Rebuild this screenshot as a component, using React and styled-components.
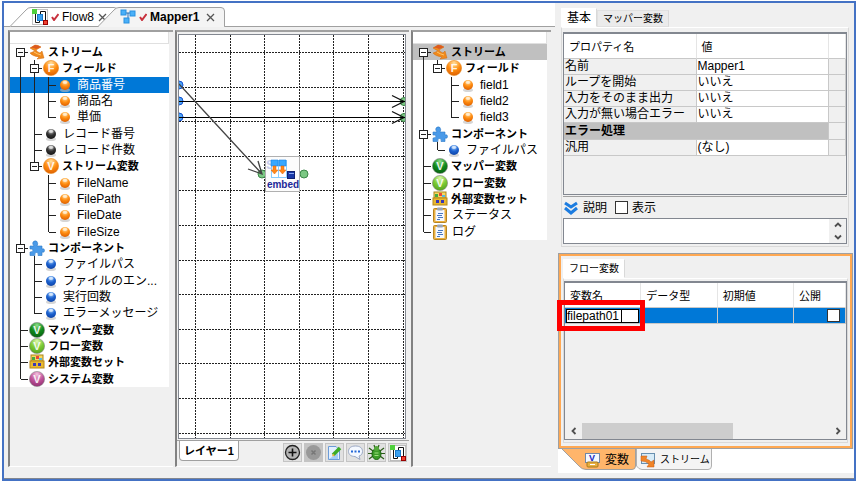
import React from 'react';
import styled, { createGlobalStyle } from 'styled-components';

const GlobalStyle = createGlobalStyle`
  * {
    box-sizing: border-box;
  }

  body {
    margin: 0;
    background: #fff;
    color: #000;
    font-family: 'Liberation Sans', 'Noto Sans CJK JP', sans-serif;
    font-size: 12px;
    line-height: 16px;
  }

  button, input, textarea {
    font: inherit;
    color: inherit;
    margin: 0;
    padding: 0;
    border-radius: 0;
  }

  svg {
    flex-shrink: 0;
  }
`;

const Page = styled.div`
  min-height: 100vh;
  padding: 1px 1px 1px 2px;
  display: flex;
`;

const Frame = styled.div`
  flex: 1;
  display: flex;
  flex-direction: column;
  border: 2px solid #4472c4;
  background: #f0f0f0;
`;

const Workspace = styled.div`
  flex: 1;
  display: grid;
  grid-template-columns: minmax(0, 551fr) minmax(0, 299fr);
`;

const StatusBar = styled.div`
  height: 6px;
  border-bottom: 1px solid #828790;
`;

/* ---------- editor ---------- */

const Editor = styled.main`
  display: flex;
  flex-direction: column;
`;

const EditorTabs = styled.div`
  display: flex;
  align-items: flex-end;
  height: 24px;
  padding-left: 6px;
  background: #fff;
  box-shadow: inset 0 -1px #a0a0a0;
`;

const EditorTabBox = styled.div`
  position: relative;
  display: flex;
  align-items: center;
  gap: ${(p) => (p.$active ? '7px' : '4px')};
  height: 20px;
  width: ${(p) => (p.$active ? '127px' : '108px')};
  margin-left: ${(p) => (p.$active ? '-20px' : '0')};
  padding-left: 22px;
  font-weight: ${(p) => (p.$active ? 'bold' : 'normal')};
`;

const TabShape = styled.svg`
  position: absolute;
  inset: 0;
  width: 100%;
  height: 100%;
`;

const PlainButton = styled.button`
  position: relative;
  display: flex;
  align-items: center;
  gap: 3px;
  border: 0;
  background: none;
`;

const EditorBody = styled.div`
  flex: 1;
  display: grid;
  grid-template-columns: minmax(0, 165fr) minmax(0, 234fr) minmax(0, 140fr);
  gap: 2px;
  padding: 3px 4px 6px;
`;

const Panel = styled.section`
  border-top: 2px solid #a0a0a0;
  border-left: 2px solid #828282;
  border-bottom: 1px solid #fff;
  display: flex;
  flex-direction: column;
  min-width: 0;
`;

const TreeBox = styled.div`
  margin-right: 4px;
  background: #fff;
`;

const TreeHeader = styled.div`
  height: 12px;
  border-right: 1px solid #e0e0e0;
  border-bottom: 1px solid #e0e0e0;
`;

const TreeList = styled.ul`
  display: flex;
  flex-direction: column;
  height: ${(p) => p.$height};
  margin: 0;
  padding: 0;
  list-style: none;
`;

const TreeRow = styled.li`
  flex: 1;
  display: flex;
  align-items: stretch;
  padding-left: 3px;
  white-space: nowrap;
  background: ${(p) => (p.$state === 'selected' ? '#0078d7' : p.$state === 'inactive' ? '#c0c0c0' : 'transparent')};
  color: ${(p) => (p.$state === 'selected' ? '#fff' : '#000')};
`;

const Guide = styled.span`
  position: relative;
  width: 14px;
  flex: none;

  &::before {
    content: '';
    position: absolute;
    display: ${(p) => (p.$kind === ' ' ? 'none' : 'block')};
    left: 7px;
    top: ${(p) => (p.$kind === 'r' ? '8px' : '0')};
    bottom: ${(p) => (p.$kind === 'l' || p.$kind === 'e' ? '8px' : '0')};
    border-left: 1px solid #222;
  }

  &::after {
    content: '';
    position: absolute;
    display: ${(p) => (p.$kind === ' ' || p.$kind === 'i' ? 'none' : 'block')};
    left: 8px;
    top: 8px;
    width: 7px;
    border-top: 1px solid #222;
  }
`;

const Expander = styled.button`
  position: absolute;
  z-index: 1;
  left: 3px;
  top: 4px;
  width: 9px;
  height: 9px;
  border: 1px solid #222;
  background: linear-gradient(#222, #222) center / 5px 1px no-repeat #fff;
`;

const NodeIcon = styled.svg`
  flex: none;
  width: 16px;
  height: 16px;
  margin-left: 2px;
`;

const NodeLabel = styled.span`
  margin-left: ${(p) => (p.$bold ? '3px' : '4px')};
  font-size: ${(p) => (p.$bold ? '11px' : '12px')};
  font-weight: ${(p) => (p.$bold ? 'bold' : 'normal')};
`;

const CanvasFrame = styled.div`
  flex: 1;
  display: flex;
  margin: 2px 3px 1px 1px;
  border: 1px solid #828790;
  background: #fff;
`;

const CanvasSvg = styled.svg`
  display: block;
  flex: 1;
  width: 100%;
  min-width: 0;
`;

const LayerBar = styled.div`
  display: flex;
  justify-content: space-between;
  height: 26px;
  padding: 0 2px;
  border-top: 1px solid #a0a0a0;
`;

const LayerTab = styled.button`
  width: 60px;
  height: 20px;
  border: 1px solid #a0a0a0;
  border-top: 0;
  border-radius: 0 0 4px 4px;
  background: #fff;
  font-size: 11px;
  font-weight: bold;
`;

const ToolGroup = styled.div`
  display: flex;
  gap: 2px;
  padding-top: 2px;
`;

const ToolButton = styled.button`
  display: grid;
  place-items: center;
  width: 19px;
  height: 19px;
  border: 1px solid #c4c4c4;
  background: ${(p) => (p.disabled ? '#c4c4c4' : '#e1e1e1')};
`;

/* ---------- side panels ---------- */

const Side = styled.aside`
  display: flex;
  flex-direction: column;
  min-width: 0;
  padding-left: 3px;
`;

const PropertyPanel = styled.section`
  display: flex;
  flex-direction: column;
  padding: 5px 5px 0 3px;
  margin-bottom: 6px;
`;

const PanelTabs = styled.div`
  display: flex;
  align-items: flex-end;
`;

const PanelTab = styled.button`
  height: ${(p) => (p.$active ? '19px' : '17px')};
  padding: 0 5px;
  border: 1px solid ${(p) => (p.$active ? '#fff' : '#e0e0e0')};
  border-right-color: #d9d9d9;
  background: ${(p) => (p.$active ? '#fff' : '#ebebeb')};
  font-size: ${(p) => (p.$small ? '10px' : '12px')};
`;

const PanelBody = styled.div`
  padding: ${(p) => (p.$tight ? '2px 0' : '4px 1px 2px')};
  border: 1px solid #d9d9d9;
  border-top-color: #fff;
`;

const TableBox = styled.div`
  position: relative;
  display: flex;
  flex-direction: column;
  height: ${(p) => p.$height};
  border: 1px solid #828790;
  border-top-width: 2px;
`;

const Table = styled.table`
  width: 100%;
  table-layout: fixed;
  border-collapse: separate;
  border-spacing: 0;
  background: #fff;

  th, td {
    height: 16px;
    padding: 0 0 0 1px;
    border-right: 1px solid #c8c8c8;
    border-bottom: 1px solid #c8c8c8;
    line-height: 15px;
    text-align: left;
    font-weight: normal;
    white-space: nowrap;
  }

  thead th {
    height: 25px;
    padding: 2px 0 0 5px;
    border-right-color: #e5e5e5;
    font-size: 11px;
  }

  tbody th, .end {
    background: #f0f0f0;
  }

  tbody .group {
    height: 17px;
    background: #c0c0c0;
    font-weight: bold;
  }

  col.narrow {
    width: 17px;
  }

  col.flag {
    width: 52px;
  }
`;

const DescriptionBar = styled.div`
  display: flex;
  align-items: center;
  height: 22px;
  margin-top: 1px;
  border-top: 1px solid #a0a0a0;
`;

const DescriptionLabel = styled.span`
  margin: 0 8px 0 4px;
`;

const CheckLabel = styled.label`
  display: flex;
  align-items: center;
  gap: 4px;
`;

const CheckBox = styled.input`
  appearance: none;
  width: 13px;
  height: 13px;
  border: 1px solid #333;
  background: #fff;
`;

const DescriptionBox = styled.div`
  display: flex;
  height: 26px;
  border: 1px solid #828790;
`;

const DescriptionText = styled.textarea`
  flex: 1;
  min-width: 0;
  border: 0;
  resize: none;
  background: #fff;
  overflow: hidden;
`;

const Spinner = styled.div`
  display: flex;
  flex-direction: column;
  width: 17px;
`;

const ArrowButton = styled.button`
  flex: 1;
  display: grid;
  place-items: center;
  border: 0;
  background: #f0f0f0;
`;

const VariablePanel = styled.section`
  margin-right: 1px;
  padding: 3px 2px 3px;
  border: 3px solid #ffa852;
  outline: 1px solid #a0a0a0;
  outline-offset: -1px;
`;

const VariableRow = styled.tr`
  background: #0078d7;

  td:first-child {
    position: relative;
  }
`;

const NameInput = styled.input`
  display: block;
  width: calc(100% - 1px);
  height: 14px;
  border: 1px solid #000;
  background: #fff;
  line-height: 12px;
`;

const Caret = styled.i`
  position: absolute;
  left: 56px;
  top: 1px;
  width: 1px;
  height: 13px;
  background: #000;
`;

const Highlight = styled.div`
  position: absolute;
  z-index: 2;
  inset: -8px -5px -8px -8px;
  border: 5px solid #f00;
  pointer-events: none;
`;

const PublicCheck = styled(CheckBox)`
  display: block;
  margin-left: auto;
  margin-right: 5px;
`;

const ScrollBar = styled.div`
  display: flex;
  height: 16px;
  margin-top: auto;
`;

const ScrollArrow = styled.button`
  display: grid;
  place-items: center;
  width: 17px;
  border: 0;
  background: none;
`;

const ScrollTrack = styled.div`
  flex: 1;
`;

const ScrollThumb = styled.div`
  width: 61%;
  height: 100%;
  background: #cdcdcd;
`;

const BottomTabs = styled.div`
  flex: 1;
  display: flex;
  align-items: flex-start;
  padding-left: 4px;
  background: #fff;
`;

const BottomTab = styled.button`
  position: relative;
  width: ${(p) => (p.$active ? '74px' : '76px')};
  height: 21px;
  padding: 0 0 0 ${(p) => (p.$active ? '23px' : '4px')};
  border: 0;
  background: none;
  font-size: ${(p) => (p.$active ? '12px' : '10px')};
  white-space: nowrap;
`;

const BottomTabInner = styled.span`
  position: relative;
  display: flex;
  align-items: center;
  gap: 4px;
`;

/* ---------- icons ---------- */

const HiddenSvg = styled.svg`
  position: absolute;
`;

const Defs = () => (
  <HiddenSvg width="0" height="0" aria-hidden="true">
    <defs>
      {[
        ['orange', '#ffe0a0', '#ff8c10', '#d85a00'],
        ['black', '#c8c8c8', '#333333', '#111111'],
        ['blue', '#a8d4ff', '#1c62d0', '#0c3fa0'],
        ['green', '#8ee08a', '#118a1c', '#055a10'],
        ['lime', '#dcf8b0', '#7ccb34', '#4f9c1c'],
        ['pink', '#f4c4e0', '#c0549a', '#8c2a6c'],
      ].map(([id, a, b, c]) => (
        <radialGradient key={id} id={id} cx="0.5" cy="0.2" r="0.85">
          <stop offset="0" stopColor={a} />
          <stop offset="0.5" stopColor={b} />
          <stop offset="1" stopColor={c} />
        </radialGradient>
      ))}
    </defs>
  </HiddenSvg>
);

const Ball = ({ color }) => (
  <>
    <ellipse cx="8" cy="13" rx="5" ry="2" fill="#bbb" opacity="0.6" />
    <circle cx="8" cy="8" r="5" fill={`url(#${color})`} />
    <ellipse cx="8" cy="5.5" rx="2.4" ry="1.4" fill="#fff" opacity="0.6" />
  </>
);

const Badge = ({ color, letter }) => (
  <>
    <circle cx="8" cy="8" r="7.6" fill={`url(#${color})`} stroke={color === 'orange' ? '#e88a20' : '#888'} strokeWidth="0.6" />
    <text x="8" y="12" textAnchor="middle" fontSize="11" fontWeight="bold" fill="#fff" fillOpacity="0.9">{letter}</text>
  </>
);

const StreamDrawing = () => (
  <>
    <path d="M1 4L6 1Q9 1 12 3L7 6Q8 8 11 9L13 7L15 14L8 15L10 13Q3 12 1 9L6 7Z" fill="#f08a1c" stroke="#d06a10" strokeWidth="0.5" />
    <path d="M1 4L6 1Q9 1 12 3L7 5Q4 3 1 4Z" fill="#dc5a20" />
    <path d="M5 8Q8 10 12 11" fill="none" stroke="#ffc468" />
  </>
);

const PuzzleDrawing = () => (
  <path
    d="M1 6H5Q3 4 4 2Q6 0 8 1.500Q9.500 4 8 6H13V9Q15.500 8 15.500 10.500Q15.500 13 13 12V15.500H9Q10 12.500 7.500 12.500Q5 12.500 6 15.500H1V12Q4 12 4 10Q4 8.500 1 9Z"
    fill="#4a9ae8"
    stroke="#2c78c8"
    strokeWidth="0.6"
  />
);

const BoxDrawing = () => (
  <>
    <rect x="2" y="1" width="12" height="6" fill="#f8d860" stroke="#a88418" />
    <rect x="3" y="3" width="3" height="3" fill="#48a840" />
    <rect x="7" y="2" width="3" height="3" fill="#e84838" />
    <rect x="10" y="4" width="3" height="2" fill="#58b8e0" />
    <rect x="1" y="7" width="14" height="7" fill="#e8b830" stroke="#b88818" />
    <rect x="4" y="9" width="3" height="3" fill="#3838b8" />
    <rect x="9" y="9" width="3" height="3" fill="#3838b8" />
  </>
);

const ClipboardDrawing = () => (
  <>
    <rect x="1.500" y="1.500" width="13" height="14" rx="1" fill="#eab040" stroke="#b88420" />
    <rect x="3.500" y="3" width="9" height="11" fill="#f4f8ff" />
    <rect x="5" y="0.500" width="6" height="3" rx="1" fill="#9aa4b4" />
    <path d="M6 6.500h5M5 8.500h5M6 10.500h5M5 12.500h3" stroke="#4878c0" />
  </>
);

const drawings = {
  stream: <StreamDrawing />,
  field: <Badge color="orange" letter="F" />,
  streamVar: <Badge color="orange" letter="V" />,
  orange: <Ball color="orange" />,
  black: <Ball color="black" />,
  blue: <Ball color="blue" />,
  puzzle: <PuzzleDrawing />,
  green: <Badge color="green" letter="V" />,
  lime: <Badge color="lime" letter="V" />,
  pink: <Badge color="pink" letter="V" />,
  box: <BoxDrawing />,
  clipboard: <ClipboardDrawing />,
};

const FlowIcon = () => (
  <svg width="16" height="16" viewBox="0 0 16 16">
    <rect x="0.500" y="0.500" width="15" height="15" fill="#fff" stroke="#888" strokeDasharray="1 1" />
    <path d="M3.500 5V13.500H7.500V11M8.500 5V2.500H13.500V11" fill="none" stroke="#111" />
    <rect x="5.500" y="5.500" width="5" height="6" fill="#3aa0f0" stroke="#1878c8" />
    <rect x="0" y="0" width="5" height="5" fill="#4fd03c" />
    <rect x="11.500" y="11.500" width="4" height="4" fill="#f04030" stroke="#900" />
  </svg>
);

const MapperIcon = () => (
  <svg width="16" height="16" viewBox="0 0 16 16">
    <path d="M5 4H10M8 4V11H7" fill="none" stroke="#2468b0" />
    <rect x="1" y="1" width="5" height="5" fill="#4ab0f8" stroke="#2890e0" />
    <rect x="10" y="2" width="5" height="5" fill="#4ab0f8" stroke="#2890e0" />
    <rect x="4" y="9" width="5" height="5" fill="#4ab0f8" stroke="#2890e0" />
  </svg>
);

const CheckMark = () => (
  <svg width="8" height="8" viewBox="0 0 8 8">
    <path d="M1 4L3 7L7.500 1" fill="none" stroke="#c8303c" strokeWidth="2" />
  </svg>
);

const CloseIcon = () => (
  <svg width="9" height="9" viewBox="0 0 9 9">
    <path d="M1 1L8 8M8 1L1 8" stroke="#555" strokeWidth="1.300" />
  </svg>
);

const Chevron = ({ turn }) => (
  <svg width="8" height="8" viewBox="0 0 8 8">
    <path d="M1 5.500L4 2.500L7 5.500" fill="none" stroke="#505050" strokeWidth="1.800" transform={`rotate(${turn} 4 4)`} />
  </svg>
);

const DoubleChevron = () => (
  <svg width="16" height="16" viewBox="0 0 16 16">
    <path d="M2 3L8 7L14 3M2 8L8 13L14 8" fill="none" stroke="#1c7ce0" strokeWidth="3" />
  </svg>
);

const PlusIcon = () => (
  <svg width="17" height="17" viewBox="0 0 17 17">
    <circle cx="8.500" cy="8.500" r="7" fill="#b4b4b4" stroke="#222" strokeWidth="1.300" />
    <path d="M8.500 4.500v8M4.500 8.500h8" stroke="#111" strokeWidth="1.600" />
  </svg>
);

const CrossIcon = () => (
  <svg width="17" height="17" viewBox="0 0 17 17">
    <circle cx="8.500" cy="8.500" r="7.500" fill="#999" />
    <path d="M6.500 6.500l4 4M10.500 6.500l-4 4" stroke="#777" strokeWidth="1.500" />
  </svg>
);

const EditIcon = () => (
  <svg width="17" height="17" viewBox="0 0 17 17">
    <path d="M2.500 2.500H10L13.500 6V15.500H2.500Z" fill="#e4f0ff" stroke="#6c9cd8" />
    <path d="M3 15L12 9V15Z" fill="#a4ccf8" />
    <path d="M7 11L14 4" stroke="#3cac28" strokeWidth="3.500" />
    <path d="M6 12.500L7 9.500L9 11.500Z" fill="#f0b040" />
  </svg>
);

const CommentIcon = () => (
  <svg width="17" height="17" viewBox="0 0 17 17">
    <path d="M8.500 2C13 2 15.500 4 15.500 7.500C15.500 10 14 11.500 12 12L13 15.500L8 12.500C4 12.500 1.500 10.500 1.500 7.500C1.500 4 4 2 8.500 2Z" fill="#f4f8ff" stroke="#9aa8c4" />
    <path d="M4 6.500h2v2h-2zM7.500 6.500h2v2h-2zM11 6.500h2v2h-2z" fill="#2468d8" />
  </svg>
);

const BugIcon = () => (
  <svg width="17" height="17" viewBox="0 0 17 17">
    <path d="M1 4L5 7M16 4L12 7M0 9.500H17M1 15L5 12M16 15L12 12M6 1L7 4M11 1L10 4" stroke="#2c5c18" strokeWidth="1.200" />
    <ellipse cx="8.500" cy="10" rx="4.500" ry="5.500" fill="#3c9c28" stroke="#1c6410" />
    <circle cx="8.500" cy="4.500" r="2.500" fill="#55a83c" />
    <path d="M6.500 9h4M6.500 11.500h4" stroke="#a0e080" />
  </svg>
);

const VariableTabIcon = () => (
  <svg width="16" height="16" viewBox="0 0 16 16">
    <rect x="0.500" y="1.500" width="14" height="9" fill="#f4f8ff" stroke="#7088a8" />
    <text x="7" y="9" textAnchor="middle" fontSize="9" fontWeight="bold" fill="#1828c0">V</text>
    <rect x="2" y="10" width="11" height="5" rx="1" fill="#e8b040" stroke="#a87818" />
    <path d="M5 12.500h5" stroke="#fff" />
  </svg>
);

const StreamTabIcon = () => (
  <svg width="16" height="16" viewBox="0 0 16 16">
    <rect x="1.500" y="1.500" width="13" height="10" fill="#d8ecf8" stroke="#6890b0" />
    <path d="M1 4L7 4L6 7Q10 8 11 10L14 8V15H7L9 12Q6 9 1 9Z" fill="#f08428" stroke="#c85a10" strokeWidth="0.500" />
  </svg>
);

/* ---------- data ---------- */

// guides: t = branch, l = last branch, i = vertical, m/e/r = expandable (middle, last, root)
const sourceTree = [
  { guides: 'r', icon: 'stream', label: 'ストリーム', bold: true },
  { guides: 'im', icon: 'field', label: 'フィールド', bold: true },
  { guides: 'iit', icon: 'orange', label: '商品番号', state: 'selected' },
  { guides: 'iit', icon: 'orange', label: '商品名' },
  { guides: 'iil', icon: 'orange', label: '単価' },
  { guides: 'it', icon: 'black', label: 'レコード番号' },
  { guides: 'it', icon: 'black', label: 'レコード件数' },
  { guides: 'ie', icon: 'streamVar', label: 'ストリーム変数', bold: true },
  { guides: 'i t', icon: 'orange', label: 'FileName' },
  { guides: 'i t', icon: 'orange', label: 'FilePath' },
  { guides: 'i t', icon: 'orange', label: 'FileDate' },
  { guides: 'i l', icon: 'orange', label: 'FileSize' },
  { guides: 'm', icon: 'puzzle', label: 'コンポーネント', bold: true },
  { guides: 'it', icon: 'blue', label: 'ファイルパス' },
  { guides: 'it', icon: 'blue', label: 'ファイルのエン...' },
  { guides: 'it', icon: 'blue', label: '実行回数' },
  { guides: 'il', icon: 'blue', label: 'エラーメッセージ' },
  { guides: 't', icon: 'green', label: 'マッパー変数', bold: true },
  { guides: 't', icon: 'lime', label: 'フロー変数', bold: true },
  { guides: 't', icon: 'box', label: '外部変数セット', bold: true },
  { guides: 'l', icon: 'pink', label: 'システム変数', bold: true },
];

const targetTree = [
  { guides: 'r', icon: 'stream', label: 'ストリーム', bold: true, state: 'inactive' },
  { guides: 'ie', icon: 'field', label: 'フィールド', bold: true },
  { guides: 'i t', icon: 'orange', label: 'field1' },
  { guides: 'i t', icon: 'orange', label: 'field2' },
  { guides: 'i l', icon: 'orange', label: 'field3' },
  { guides: 'm', icon: 'puzzle', label: 'コンポーネント', bold: true },
  { guides: 'il', icon: 'blue', label: 'ファイルパス' },
  { guides: 't', icon: 'green', label: 'マッパー変数', bold: true },
  { guides: 't', icon: 'lime', label: 'フロー変数', bold: true },
  { guides: 't', icon: 'box', label: '外部変数セット', bold: true },
  { guides: 't', icon: 'clipboard', label: 'ステータス' },
  { guides: 'l', icon: 'clipboard', label: 'ログ' },
];

const properties = [
  ['名前', 'Mapper1'],
  ['ループを開始', 'いいえ'],
  ['入力をそのまま出力', 'いいえ'],
  ['入力が無い場合エラー', 'いいえ'],
];

const tools = [
  ['追加', <PlusIcon />],
  ['削除', <CrossIcon />],
  ['編集', <EditIcon />],
  ['コメント', <CommentIcon />],
  ['デバッグ', <BugIcon />],
  ['フロー', <FlowIcon />],
];

/* ---------- components ---------- */

const Tree = ({ nodes, height }) => (
  <Panel>
    <TreeBox>
      <TreeHeader />
      <TreeList $height={height}>
        {nodes.map((node) => (
          <TreeRow key={node.label} $state={node.state}>
            {node.guides.split('').map((kind, i) => (
              <Guide key={i} $kind={kind}>
                {'mer'.includes(kind) && <Expander aria-label={node.label} />}
              </Guide>
            ))}
            <NodeIcon viewBox="0 0 16 16">{drawings[node.icon]}</NodeIcon>
            <NodeLabel $bold={node.bold}>{node.label}</NodeLabel>
          </TreeRow>
        ))}
      </TreeList>
    </TreeBox>
  </Panel>
);

const EditorTab = ({ active, icon, label }) => {
  const w = active ? 127 : 108;
  return (
    <EditorTabBox $active={active}>
      <TabShape viewBox={`0 0 ${w} 20`}>
        <path
          d={`M0 19.500 L16 3 Q18 0.500 21 0.500 H${w - 4} Q${w - 0.5} 0.500 ${w - 0.5} 4 V19.500`}
          fill={active ? '#f4f4f4' : '#fff'}
          stroke="#a0a0a0"
        />
        <path d={`M1 19.500H${w - 1}`} stroke={active ? '#f4f4f4' : '#a0a0a0'} />
      </TabShape>
      <PlainButton>
        {icon}
        <CheckMark />
        {label}
      </PlainButton>
      <PlainButton aria-label="閉じる">
        <CloseIcon />
      </PlainButton>
    </EditorTabBox>
  );
};

const Port = ({ x, y, color }) => (
  <circle cx={x} cy={y} r="4" fill={color === 'blue' ? '#4aa4f8' : '#7cc884'} stroke={color === 'blue' ? '#1450d0' : '#3c8848'} />
);

const MappingCanvas = () => {
  const lines = Array.from({ length: 40 }, (_, i) => Math.round(16 + i * 34.6) + 0.5);
  return (
    <CanvasFrame>
      <CanvasSvg height="403">
        <g stroke="#222" strokeDasharray="2 1">
          {lines.map((p) => (
            <React.Fragment key={p}>
              <line x1={p} y1="0" x2={p} y2="100%" />
              <line x1="0" y1={p + 1} x2="100%" y2={p + 1} />
            </React.Fragment>
          ))}
        </g>
        <Port x={0} y={50} color="blue" />
        <Port x={0} y={66} color="blue" />
        <Port x={0} y={82} color="blue" />
        <svg x="100%" y="0" overflow="visible">
          {[66.5, 82.5].map((y) => (
            <g key={y}>
              <Port x={-1} y={y} />
              <path d={`M-13 ${y - 6}L-1 ${y}L-13 ${y + 6}`} fill="none" stroke="#111" strokeWidth="1.300" />
            </g>
          ))}
        </svg>
        <line x1="0" y1="66.500" x2="100%" y2="66.500" stroke="#000" />
        <line x1="0" y1="82.500" x2="100%" y2="82.500" stroke="#000" />
        <Port x={83} y={139} />
        <Port x={125} y={139} />
        <path d="M0 49L83 139M69 134L83 139L79 126" fill="none" stroke="#444" strokeWidth="1.300" />
        <rect x="86.500" y="121.500" width="34" height="35" fill="#fcfcfc" stroke="#b0b0b0" />
        <text x="87" y="134" fontSize="13" fontWeight="bold" fill="#c8ccec">Str</text>
        <g stroke="#88ccff" fill="#fff">
          <rect x="92.500" y="125.500" width="7" height="17" />
          <rect x="99.500" y="125.500" width="8" height="17" />
        </g>
        <path d="M92 125h7v6h-7zM100 125h7v6h-7z" fill="#38a8ff" stroke="#1880e0" strokeWidth="0.600" />
        <path d="M94 131h3v4h2l-3.500 4l-3.500 -4h2zM102 131h3v4h2l-3.500 4l-3.500 -4h2z" fill="#ff8818" stroke="#e06008" strokeWidth="0.500" />
        <rect x="108.500" y="136.500" width="7" height="7" fill="#1838a8" stroke="#102070" />
        <path d="M110 138.500h5" stroke="#8ca8f0" />
        <text x="104" y="153" textAnchor="middle" fontSize="10" fontWeight="bold" fill="#1c2898">embed</text>
      </CanvasSvg>
    </CanvasFrame>
  );
};

const PropertyTable = () => (
  <TableBox $height="163px">
    <Table>
      <colgroup>
        <col />
        <col />
        <col className="narrow" />
      </colgroup>
      <thead>
        <tr>
          <th>プロパティ名</th>
          <th>値</th>
          <th />
        </tr>
      </thead>
      <tbody>
        {properties.map(([name, value]) => (
          <tr key={name}>
            <th>{name}</th>
            <td>{value}</td>
            <td className="end" />
          </tr>
        ))}
        <tr>
          <th className="group" colSpan="2">エラー処理</th>
          <td className="end" />
        </tr>
        <tr>
          <th>汎用</th>
          <td>(なし)</td>
          <td className="end" />
        </tr>
      </tbody>
    </Table>
  </TableBox>
);

const VariableTable = () => (
  <TableBox $height="159px">
    <Table>
      <colgroup>
        <col />
        <col />
        <col />
        <col className="flag" />
      </colgroup>
      <thead>
        <tr>
          <th>変数名</th>
          <th>データ型</th>
          <th>初期値</th>
          <th>公開</th>
        </tr>
      </thead>
      <tbody>
        <VariableRow>
          <td>
            <NameInput aria-label="変数名" defaultValue="filepath01" />
            <Caret />
            <Highlight />
          </td>
          <td />
          <td />
          <td>
            <PublicCheck type="checkbox" aria-label="公開" />
          </td>
        </VariableRow>
      </tbody>
    </Table>
    <ScrollBar>
      <ScrollArrow aria-label="左へ"><Chevron turn={-90} /></ScrollArrow>
      <ScrollTrack>
        <ScrollThumb />
      </ScrollTrack>
      <ScrollArrow aria-label="右へ"><Chevron turn={90} /></ScrollArrow>
    </ScrollBar>
  </TableBox>
);

const App = () => {
  return (
    <Page>
      <GlobalStyle />
      <Defs />
      <Frame>
        <Workspace>
          <Editor>
            <EditorTabs>
              <EditorTab icon={<FlowIcon />} label="Flow8" />
              <EditorTab active icon={<MapperIcon />} label="Mapper1" />
            </EditorTabs>
            <EditorBody>
              <Tree nodes={sourceTree} height="343px" />
              <Panel>
                <MappingCanvas />
                <LayerBar>
                  <LayerTab>レイヤー1</LayerTab>
                  <ToolGroup>
                    {tools.map(([label, icon]) => (
                      <ToolButton key={label} aria-label={label} disabled={label === '削除'}>{icon}</ToolButton>
                    ))}
                  </ToolGroup>
                </LayerBar>
              </Panel>
              <Tree nodes={targetTree} height="196px" />
            </EditorBody>
          </Editor>

          <Side>
            <PropertyPanel>
              <PanelTabs>
                <PanelTab $active>基本</PanelTab>
                <PanelTab $small>マッパー変数</PanelTab>
              </PanelTabs>
              <PanelBody>
                <PropertyTable />
                <DescriptionBar>
                  <DoubleChevron />
                  <DescriptionLabel id="description">説明</DescriptionLabel>
                  <CheckLabel>
                    <CheckBox type="checkbox" />
                    表示
                  </CheckLabel>
                </DescriptionBar>
                <DescriptionBox>
                  <DescriptionText aria-labelledby="description" />
                  <Spinner>
                    <ArrowButton aria-label="上へ"><Chevron turn={0} /></ArrowButton>
                    <ArrowButton aria-label="下へ"><Chevron turn={180} /></ArrowButton>
                  </Spinner>
                </DescriptionBox>
              </PanelBody>
            </PropertyPanel>

            <VariablePanel>
              <PanelTabs>
                <PanelTab $active $small>フロー変数</PanelTab>
              </PanelTabs>
              <PanelBody $tight>
                <VariableTable />
              </PanelBody>
            </VariablePanel>
            <BottomTabs>
              <BottomTab $active>
                <TabShape viewBox="0 0 74 21">
                  <path d="M0 0L17 17Q20 20.500 24 20.500H70Q73.500 20.500 73.500 17V0" fill="#ffb56b" stroke="#a0a0a0" />
                </TabShape>
                <BottomTabInner>
                  <VariableTabIcon />
                  変数
                </BottomTabInner>
              </BottomTab>
              <BottomTab>
                <TabShape viewBox="0 0 76 21">
                  <path d="M0.500 0V17Q3 20.500 6 20.500H72Q75.500 20.500 75.500 17V0" fill="#f4f4f4" stroke="#b0b0b0" />
                </TabShape>
                <BottomTabInner>
                  <StreamTabIcon />
                  ストリーム
                </BottomTabInner>
              </BottomTab>
            </BottomTabs>
          </Side>
        </Workspace>
        <StatusBar />
      </Frame>
    </Page>
  );
};

export default App;
